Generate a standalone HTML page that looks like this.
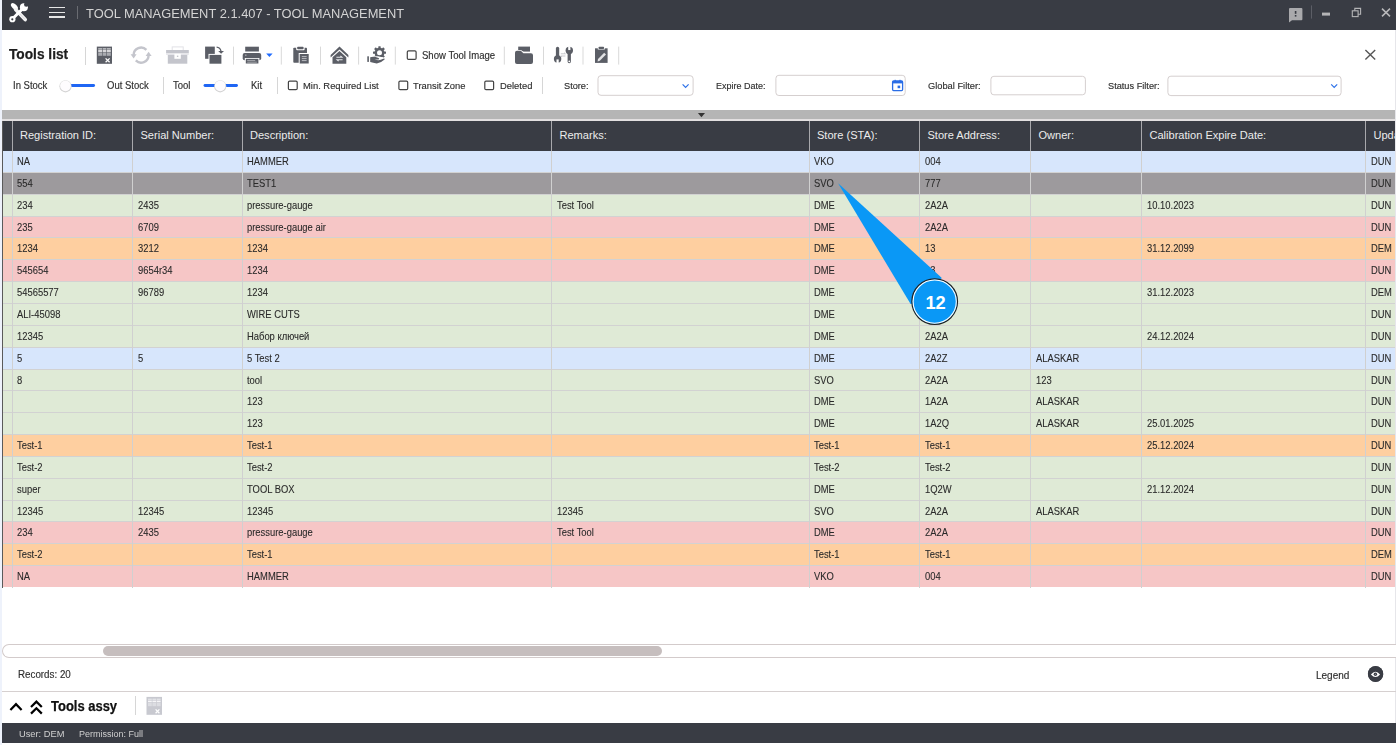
<!DOCTYPE html>
<html><head><meta charset="utf-8"><style>
html,body{margin:0;padding:0;width:1396px;height:746px;overflow:hidden;background:#fff;font-family:"Liberation Sans", sans-serif;}
.t{position:absolute;white-space:nowrap;line-height:1;}
.b{position:absolute;}
svg{position:absolute;}
</style></head><body>
<div class="b" style="left:0px;top:0px;width:2px;height:744.5px;background:#eef2fb"></div>
<div class="b" style="left:2px;top:0px;width:1394px;height:29.5px;background:#393c44"></div>
<div class="t" style="left:85.8px;top:6.93px;font-size:13.2px;color:#d4d4d4;font-weight:400;transform:scaleX(0.977);transform-origin:0 0;">TOOL MANAGEMENT 2.1.407 - TOOL MANAGEMENT</div>
<div class="b" style="left:49px;top:6.8px;width:16px;height:1.6px;background:#e6e6e6"></div>
<div class="b" style="left:49px;top:11.6px;width:16px;height:1.6px;background:#e6e6e6"></div>
<div class="b" style="left:49px;top:16.3px;width:16px;height:1.6px;background:#e6e6e6"></div>
<div class="b" style="left:77px;top:5.5px;width:1px;height:13px;background:#6a6c72"></div>
<div class="t" style="left:9px;top:46.81px;font-size:14.4px;color:#1e1e1e;font-weight:700;-webkit-text-stroke:0.25px #1e1e1e;transform:scaleX(0.952);transform-origin:0 0;">Tools list</div>
<div class="b" style="left:85px;top:46.5px;width:1px;height:18px;background:#d6d6d6"></div>
<div class="t" style="left:12.9px;top:81.02px;font-size:10.02px;color:#2e2e2e;font-weight:400;-webkit-text-stroke:0.15px #2e2e2e;transform:scaleX(0.948);transform-origin:0 0;">In Stock</div>
<div class="t" style="left:106.9px;top:81.02px;font-size:10.02px;color:#2e2e2e;font-weight:400;-webkit-text-stroke:0.15px #2e2e2e;transform:scaleX(0.948);transform-origin:0 0;">Out Stock</div>
<div class="b" style="left:163px;top:76.7px;width:1px;height:17px;background:#d6d6d6"></div>
<div class="t" style="left:173px;top:81.02px;font-size:10.02px;color:#2e2e2e;font-weight:400;-webkit-text-stroke:0.15px #2e2e2e;transform:scaleX(0.948);transform-origin:0 0;">Tool</div>
<div class="t" style="left:250.5px;top:81.02px;font-size:10.02px;color:#2e2e2e;font-weight:400;-webkit-text-stroke:0.15px #2e2e2e;transform:scaleX(0.948);transform-origin:0 0;">Kit</div>
<div class="b" style="left:276.5px;top:76.7px;width:1px;height:17px;background:#d6d6d6"></div>
<div class="t" style="left:303.3px;top:81.30px;font-size:9.92px;color:#2e2e2e;font-weight:400;-webkit-text-stroke:0.15px #2e2e2e;transform:scaleX(0.948);transform-origin:0 0;">Min. Required List</div>
<div class="t" style="left:421.5px;top:51.47px;font-size:10.08px;color:#2e2e2e;font-weight:400;-webkit-text-stroke:0.15px #2e2e2e;transform:scaleX(0.948);transform-origin:0 0;">Show Tool Image</div>
<div class="t" style="left:413px;top:81.30px;font-size:9.92px;color:#2e2e2e;font-weight:400;-webkit-text-stroke:0.15px #2e2e2e;transform:scaleX(0.948);transform-origin:0 0;">Transit Zone</div>
<div class="t" style="left:499.7px;top:81.30px;font-size:9.92px;color:#2e2e2e;font-weight:400;-webkit-text-stroke:0.15px #2e2e2e;transform:scaleX(0.948);transform-origin:0 0;">Deleted</div>
<div class="b" style="left:541.5px;top:76.7px;width:1px;height:17px;background:#d6d6d6"></div>
<div class="t" style="left:564.2px;top:80.78px;font-size:9.71px;color:#2e2e2e;font-weight:400;-webkit-text-stroke:0.15px #2e2e2e;transform:scaleX(0.948);transform-origin:0 0;">Store:</div>
<div class="t" style="left:715.8px;top:80.97px;font-size:9.49px;color:#2e2e2e;font-weight:400;-webkit-text-stroke:0.15px #2e2e2e;transform:scaleX(0.948);transform-origin:0 0;">Expire Date:</div>
<div class="t" style="left:927.8px;top:80.70px;font-size:9.81px;color:#2e2e2e;font-weight:400;-webkit-text-stroke:0.15px #2e2e2e;transform:scaleX(0.948);transform-origin:0 0;">Global Filter:</div>
<div class="t" style="left:1108.2px;top:80.78px;font-size:9.71px;color:#2e2e2e;font-weight:400;-webkit-text-stroke:0.15px #2e2e2e;transform:scaleX(0.948);transform-origin:0 0;">Status Filter:</div>
<div class="b" style="left:2px;top:109.7px;width:1394px;height:9.3px;background:#b5b5b5"></div>
<div class="b" style="left:2px;top:119px;width:1394px;height:2px;background:#e2dfe0"></div>
<div class="b" style="left:2px;top:121px;width:1394px;height:29.5px;background:#393c44"></div>
<div class="t" style="left:20px;top:129.65px;font-size:11.05px;color:#ececec;font-weight:400;">Registration ID:</div>
<div class="t" style="left:140.5px;top:129.65px;font-size:11.05px;color:#ececec;font-weight:400;">Serial Number:</div>
<div class="t" style="left:250px;top:129.65px;font-size:11.05px;color:#ececec;font-weight:400;">Description:</div>
<div class="t" style="left:559.5px;top:129.65px;font-size:11.05px;color:#ececec;font-weight:400;">Remarks:</div>
<div class="t" style="left:817px;top:129.65px;font-size:11.05px;color:#ececec;font-weight:400;">Store (STA):</div>
<div class="t" style="left:927.5px;top:129.65px;font-size:11.05px;color:#ececec;font-weight:400;">Store Address:</div>
<div class="t" style="left:1038.5px;top:129.65px;font-size:11.05px;color:#ececec;font-weight:400;">Owner:</div>
<div class="t" style="left:1149.5px;top:129.65px;font-size:11.05px;color:#ececec;font-weight:400;">Calibration Expire Date:</div>
<div class="t" style="left:1373.5px;top:129.65px;font-size:11.05px;color:#ececec;font-weight:400;">Update</div>
<div class="b" style="left:11.5px;top:121px;width:1px;height:29.5px;background:#a8a8ac"></div>
<div class="b" style="left:132.0px;top:121px;width:1px;height:29.5px;background:#a8a8ac"></div>
<div class="b" style="left:241.5px;top:121px;width:1px;height:29.5px;background:#a8a8ac"></div>
<div class="b" style="left:551.0px;top:121px;width:1px;height:29.5px;background:#a8a8ac"></div>
<div class="b" style="left:808.5px;top:121px;width:1px;height:29.5px;background:#a8a8ac"></div>
<div class="b" style="left:919.0px;top:121px;width:1px;height:29.5px;background:#a8a8ac"></div>
<div class="b" style="left:1030.0px;top:121px;width:1px;height:29.5px;background:#a8a8ac"></div>
<div class="b" style="left:1141.0px;top:121px;width:1px;height:29.5px;background:#a8a8ac"></div>
<div class="b" style="left:1365.0px;top:121px;width:1px;height:29.5px;background:#a8a8ac"></div>
<div class="b" style="left:3px;top:150.5px;width:1393px;height:21.85px;background:#d7e6fc"></div>
<div class="t" style="left:17.3px;top:156.01px;font-size:10.5px;color:#2a2a2a;font-weight:400;-webkit-text-stroke:0.1px #2a2a2a;transform:scaleX(0.895);transform-origin:0 0;">NA</div>
<div class="t" style="left:247.3px;top:156.01px;font-size:10.5px;color:#2a2a2a;font-weight:400;-webkit-text-stroke:0.1px #2a2a2a;transform:scaleX(0.895);transform-origin:0 0;">HAMMER</div>
<div class="t" style="left:814.3px;top:156.01px;font-size:10.5px;color:#2a2a2a;font-weight:400;-webkit-text-stroke:0.1px #2a2a2a;transform:scaleX(0.895);transform-origin:0 0;">VKO</div>
<div class="t" style="left:924.8px;top:156.01px;font-size:10.5px;color:#2a2a2a;font-weight:400;-webkit-text-stroke:0.1px #2a2a2a;transform:scaleX(0.895);transform-origin:0 0;">004</div>
<div class="t" style="left:1370.8px;top:156.01px;font-size:10.5px;color:#2a2a2a;font-weight:400;-webkit-text-stroke:0.1px #2a2a2a;transform:scaleX(0.895);transform-origin:0 0;">DUN</div>
<div class="b" style="left:3px;top:172.35px;width:1393px;height:21.85px;background:#9d9a9d"></div>
<div class="b" style="left:3px;top:171.85px;width:1393px;height:1px;background:#d2d2d2"></div>
<div class="t" style="left:17.3px;top:177.86px;font-size:10.5px;color:#2a2a2a;font-weight:400;-webkit-text-stroke:0.1px #2a2a2a;transform:scaleX(0.895);transform-origin:0 0;">554</div>
<div class="t" style="left:247.3px;top:177.86px;font-size:10.5px;color:#2a2a2a;font-weight:400;-webkit-text-stroke:0.1px #2a2a2a;transform:scaleX(0.895);transform-origin:0 0;">TEST1</div>
<div class="t" style="left:814.3px;top:177.86px;font-size:10.5px;color:#2a2a2a;font-weight:400;-webkit-text-stroke:0.1px #2a2a2a;transform:scaleX(0.895);transform-origin:0 0;">SVO</div>
<div class="t" style="left:924.8px;top:177.86px;font-size:10.5px;color:#2a2a2a;font-weight:400;-webkit-text-stroke:0.1px #2a2a2a;transform:scaleX(0.895);transform-origin:0 0;">777</div>
<div class="t" style="left:1370.8px;top:177.86px;font-size:10.5px;color:#2a2a2a;font-weight:400;-webkit-text-stroke:0.1px #2a2a2a;transform:scaleX(0.895);transform-origin:0 0;">DUN</div>
<div class="b" style="left:3px;top:194.2px;width:1393px;height:21.85px;background:#dfead6"></div>
<div class="b" style="left:3px;top:193.7px;width:1393px;height:1px;background:#d2d2d2"></div>
<div class="t" style="left:17.3px;top:199.71px;font-size:10.5px;color:#2a2a2a;font-weight:400;-webkit-text-stroke:0.1px #2a2a2a;transform:scaleX(0.895);transform-origin:0 0;">234</div>
<div class="t" style="left:137.8px;top:199.71px;font-size:10.5px;color:#2a2a2a;font-weight:400;-webkit-text-stroke:0.1px #2a2a2a;transform:scaleX(0.895);transform-origin:0 0;">2435</div>
<div class="t" style="left:247.3px;top:199.71px;font-size:10.5px;color:#2a2a2a;font-weight:400;-webkit-text-stroke:0.1px #2a2a2a;transform:scaleX(0.895);transform-origin:0 0;">pressure-gauge</div>
<div class="t" style="left:556.8px;top:199.71px;font-size:10.5px;color:#2a2a2a;font-weight:400;-webkit-text-stroke:0.1px #2a2a2a;transform:scaleX(0.895);transform-origin:0 0;">Test Tool</div>
<div class="t" style="left:814.3px;top:199.71px;font-size:10.5px;color:#2a2a2a;font-weight:400;-webkit-text-stroke:0.1px #2a2a2a;transform:scaleX(0.895);transform-origin:0 0;">DME</div>
<div class="t" style="left:924.8px;top:199.71px;font-size:10.5px;color:#2a2a2a;font-weight:400;-webkit-text-stroke:0.1px #2a2a2a;transform:scaleX(0.895);transform-origin:0 0;">2A2A</div>
<div class="t" style="left:1146.8px;top:199.71px;font-size:10.5px;color:#2a2a2a;font-weight:400;-webkit-text-stroke:0.1px #2a2a2a;transform:scaleX(0.895);transform-origin:0 0;">10.10.2023</div>
<div class="t" style="left:1370.8px;top:199.71px;font-size:10.5px;color:#2a2a2a;font-weight:400;-webkit-text-stroke:0.1px #2a2a2a;transform:scaleX(0.895);transform-origin:0 0;">DUN</div>
<div class="b" style="left:3px;top:216.05px;width:1393px;height:21.85px;background:#f6c6c6"></div>
<div class="b" style="left:3px;top:215.55px;width:1393px;height:1px;background:#d2d2d2"></div>
<div class="t" style="left:17.3px;top:221.56px;font-size:10.5px;color:#2a2a2a;font-weight:400;-webkit-text-stroke:0.1px #2a2a2a;transform:scaleX(0.895);transform-origin:0 0;">235</div>
<div class="t" style="left:137.8px;top:221.56px;font-size:10.5px;color:#2a2a2a;font-weight:400;-webkit-text-stroke:0.1px #2a2a2a;transform:scaleX(0.895);transform-origin:0 0;">6709</div>
<div class="t" style="left:247.3px;top:221.56px;font-size:10.5px;color:#2a2a2a;font-weight:400;-webkit-text-stroke:0.1px #2a2a2a;transform:scaleX(0.895);transform-origin:0 0;">pressure-gauge air</div>
<div class="t" style="left:814.3px;top:221.56px;font-size:10.5px;color:#2a2a2a;font-weight:400;-webkit-text-stroke:0.1px #2a2a2a;transform:scaleX(0.895);transform-origin:0 0;">DME</div>
<div class="t" style="left:924.8px;top:221.56px;font-size:10.5px;color:#2a2a2a;font-weight:400;-webkit-text-stroke:0.1px #2a2a2a;transform:scaleX(0.895);transform-origin:0 0;">2A2A</div>
<div class="t" style="left:1370.8px;top:221.56px;font-size:10.5px;color:#2a2a2a;font-weight:400;-webkit-text-stroke:0.1px #2a2a2a;transform:scaleX(0.895);transform-origin:0 0;">DUN</div>
<div class="b" style="left:3px;top:237.9px;width:1393px;height:21.85px;background:#fecfa0"></div>
<div class="b" style="left:3px;top:237.4px;width:1393px;height:1px;background:#d2d2d2"></div>
<div class="t" style="left:17.3px;top:243.41px;font-size:10.5px;color:#2a2a2a;font-weight:400;-webkit-text-stroke:0.1px #2a2a2a;transform:scaleX(0.895);transform-origin:0 0;">1234</div>
<div class="t" style="left:137.8px;top:243.41px;font-size:10.5px;color:#2a2a2a;font-weight:400;-webkit-text-stroke:0.1px #2a2a2a;transform:scaleX(0.895);transform-origin:0 0;">3212</div>
<div class="t" style="left:247.3px;top:243.41px;font-size:10.5px;color:#2a2a2a;font-weight:400;-webkit-text-stroke:0.1px #2a2a2a;transform:scaleX(0.895);transform-origin:0 0;">1234</div>
<div class="t" style="left:814.3px;top:243.41px;font-size:10.5px;color:#2a2a2a;font-weight:400;-webkit-text-stroke:0.1px #2a2a2a;transform:scaleX(0.895);transform-origin:0 0;">DME</div>
<div class="t" style="left:924.8px;top:243.41px;font-size:10.5px;color:#2a2a2a;font-weight:400;-webkit-text-stroke:0.1px #2a2a2a;transform:scaleX(0.895);transform-origin:0 0;">13</div>
<div class="t" style="left:1146.8px;top:243.41px;font-size:10.5px;color:#2a2a2a;font-weight:400;-webkit-text-stroke:0.1px #2a2a2a;transform:scaleX(0.895);transform-origin:0 0;">31.12.2099</div>
<div class="t" style="left:1370.8px;top:243.41px;font-size:10.5px;color:#2a2a2a;font-weight:400;-webkit-text-stroke:0.1px #2a2a2a;transform:scaleX(0.895);transform-origin:0 0;">DEM</div>
<div class="b" style="left:3px;top:259.75px;width:1393px;height:21.85px;background:#f6c6c6"></div>
<div class="b" style="left:3px;top:259.25px;width:1393px;height:1px;background:#d2d2d2"></div>
<div class="t" style="left:17.3px;top:265.26px;font-size:10.5px;color:#2a2a2a;font-weight:400;-webkit-text-stroke:0.1px #2a2a2a;transform:scaleX(0.895);transform-origin:0 0;">545654</div>
<div class="t" style="left:137.8px;top:265.26px;font-size:10.5px;color:#2a2a2a;font-weight:400;-webkit-text-stroke:0.1px #2a2a2a;transform:scaleX(0.895);transform-origin:0 0;">9654r34</div>
<div class="t" style="left:247.3px;top:265.26px;font-size:10.5px;color:#2a2a2a;font-weight:400;-webkit-text-stroke:0.1px #2a2a2a;transform:scaleX(0.895);transform-origin:0 0;">1234</div>
<div class="t" style="left:814.3px;top:265.26px;font-size:10.5px;color:#2a2a2a;font-weight:400;-webkit-text-stroke:0.1px #2a2a2a;transform:scaleX(0.895);transform-origin:0 0;">DME</div>
<div class="t" style="left:924.8px;top:265.26px;font-size:10.5px;color:#2a2a2a;font-weight:400;-webkit-text-stroke:0.1px #2a2a2a;transform:scaleX(0.895);transform-origin:0 0;">13</div>
<div class="t" style="left:1370.8px;top:265.26px;font-size:10.5px;color:#2a2a2a;font-weight:400;-webkit-text-stroke:0.1px #2a2a2a;transform:scaleX(0.895);transform-origin:0 0;">DUN</div>
<div class="b" style="left:3px;top:281.6px;width:1393px;height:21.85px;background:#dfead6"></div>
<div class="b" style="left:3px;top:281.1px;width:1393px;height:1px;background:#d2d2d2"></div>
<div class="t" style="left:17.3px;top:287.11px;font-size:10.5px;color:#2a2a2a;font-weight:400;-webkit-text-stroke:0.1px #2a2a2a;transform:scaleX(0.895);transform-origin:0 0;">54565577</div>
<div class="t" style="left:137.8px;top:287.11px;font-size:10.5px;color:#2a2a2a;font-weight:400;-webkit-text-stroke:0.1px #2a2a2a;transform:scaleX(0.895);transform-origin:0 0;">96789</div>
<div class="t" style="left:247.3px;top:287.11px;font-size:10.5px;color:#2a2a2a;font-weight:400;-webkit-text-stroke:0.1px #2a2a2a;transform:scaleX(0.895);transform-origin:0 0;">1234</div>
<div class="t" style="left:814.3px;top:287.11px;font-size:10.5px;color:#2a2a2a;font-weight:400;-webkit-text-stroke:0.1px #2a2a2a;transform:scaleX(0.895);transform-origin:0 0;">DME</div>
<div class="t" style="left:1146.8px;top:287.11px;font-size:10.5px;color:#2a2a2a;font-weight:400;-webkit-text-stroke:0.1px #2a2a2a;transform:scaleX(0.895);transform-origin:0 0;">31.12.2023</div>
<div class="t" style="left:1370.8px;top:287.11px;font-size:10.5px;color:#2a2a2a;font-weight:400;-webkit-text-stroke:0.1px #2a2a2a;transform:scaleX(0.895);transform-origin:0 0;">DEM</div>
<div class="b" style="left:3px;top:303.45px;width:1393px;height:21.85px;background:#dfead6"></div>
<div class="b" style="left:3px;top:302.95px;width:1393px;height:1px;background:#d2d2d2"></div>
<div class="t" style="left:17.3px;top:308.96px;font-size:10.5px;color:#2a2a2a;font-weight:400;-webkit-text-stroke:0.1px #2a2a2a;transform:scaleX(0.895);transform-origin:0 0;">ALI-45098</div>
<div class="t" style="left:247.3px;top:308.96px;font-size:10.5px;color:#2a2a2a;font-weight:400;-webkit-text-stroke:0.1px #2a2a2a;transform:scaleX(0.895);transform-origin:0 0;">WIRE CUTS</div>
<div class="t" style="left:814.3px;top:308.96px;font-size:10.5px;color:#2a2a2a;font-weight:400;-webkit-text-stroke:0.1px #2a2a2a;transform:scaleX(0.895);transform-origin:0 0;">DME</div>
<div class="t" style="left:1370.8px;top:308.96px;font-size:10.5px;color:#2a2a2a;font-weight:400;-webkit-text-stroke:0.1px #2a2a2a;transform:scaleX(0.895);transform-origin:0 0;">DUN</div>
<div class="b" style="left:3px;top:325.3px;width:1393px;height:21.85px;background:#dfead6"></div>
<div class="b" style="left:3px;top:324.8px;width:1393px;height:1px;background:#d2d2d2"></div>
<div class="t" style="left:17.3px;top:330.81px;font-size:10.5px;color:#2a2a2a;font-weight:400;-webkit-text-stroke:0.1px #2a2a2a;transform:scaleX(0.895);transform-origin:0 0;">12345</div>
<div class="t" style="left:247.3px;top:330.81px;font-size:10.5px;color:#2a2a2a;font-weight:400;-webkit-text-stroke:0.1px #2a2a2a;transform:scaleX(0.895);transform-origin:0 0;">Набор ключей</div>
<div class="t" style="left:814.3px;top:330.81px;font-size:10.5px;color:#2a2a2a;font-weight:400;-webkit-text-stroke:0.1px #2a2a2a;transform:scaleX(0.895);transform-origin:0 0;">DME</div>
<div class="t" style="left:924.8px;top:330.81px;font-size:10.5px;color:#2a2a2a;font-weight:400;-webkit-text-stroke:0.1px #2a2a2a;transform:scaleX(0.895);transform-origin:0 0;">2A2A</div>
<div class="t" style="left:1146.8px;top:330.81px;font-size:10.5px;color:#2a2a2a;font-weight:400;-webkit-text-stroke:0.1px #2a2a2a;transform:scaleX(0.895);transform-origin:0 0;">24.12.2024</div>
<div class="t" style="left:1370.8px;top:330.81px;font-size:10.5px;color:#2a2a2a;font-weight:400;-webkit-text-stroke:0.1px #2a2a2a;transform:scaleX(0.895);transform-origin:0 0;">DUN</div>
<div class="b" style="left:3px;top:347.15px;width:1393px;height:21.85px;background:#d7e6fc"></div>
<div class="b" style="left:3px;top:346.65px;width:1393px;height:1px;background:#d2d2d2"></div>
<div class="t" style="left:17.3px;top:352.66px;font-size:10.5px;color:#2a2a2a;font-weight:400;-webkit-text-stroke:0.1px #2a2a2a;transform:scaleX(0.895);transform-origin:0 0;">5</div>
<div class="t" style="left:137.8px;top:352.66px;font-size:10.5px;color:#2a2a2a;font-weight:400;-webkit-text-stroke:0.1px #2a2a2a;transform:scaleX(0.895);transform-origin:0 0;">5</div>
<div class="t" style="left:247.3px;top:352.66px;font-size:10.5px;color:#2a2a2a;font-weight:400;-webkit-text-stroke:0.1px #2a2a2a;transform:scaleX(0.895);transform-origin:0 0;">5 Test 2</div>
<div class="t" style="left:814.3px;top:352.66px;font-size:10.5px;color:#2a2a2a;font-weight:400;-webkit-text-stroke:0.1px #2a2a2a;transform:scaleX(0.895);transform-origin:0 0;">DME</div>
<div class="t" style="left:924.8px;top:352.66px;font-size:10.5px;color:#2a2a2a;font-weight:400;-webkit-text-stroke:0.1px #2a2a2a;transform:scaleX(0.895);transform-origin:0 0;">2A2Z</div>
<div class="t" style="left:1035.8px;top:352.66px;font-size:10.5px;color:#2a2a2a;font-weight:400;-webkit-text-stroke:0.1px #2a2a2a;transform:scaleX(0.895);transform-origin:0 0;">ALASKAR</div>
<div class="t" style="left:1370.8px;top:352.66px;font-size:10.5px;color:#2a2a2a;font-weight:400;-webkit-text-stroke:0.1px #2a2a2a;transform:scaleX(0.895);transform-origin:0 0;">DUN</div>
<div class="b" style="left:3px;top:369.0px;width:1393px;height:21.85px;background:#dfead6"></div>
<div class="b" style="left:3px;top:368.5px;width:1393px;height:1px;background:#d2d2d2"></div>
<div class="t" style="left:17.3px;top:374.51px;font-size:10.5px;color:#2a2a2a;font-weight:400;-webkit-text-stroke:0.1px #2a2a2a;transform:scaleX(0.895);transform-origin:0 0;">8</div>
<div class="t" style="left:247.3px;top:374.51px;font-size:10.5px;color:#2a2a2a;font-weight:400;-webkit-text-stroke:0.1px #2a2a2a;transform:scaleX(0.895);transform-origin:0 0;">tool</div>
<div class="t" style="left:814.3px;top:374.51px;font-size:10.5px;color:#2a2a2a;font-weight:400;-webkit-text-stroke:0.1px #2a2a2a;transform:scaleX(0.895);transform-origin:0 0;">SVO</div>
<div class="t" style="left:924.8px;top:374.51px;font-size:10.5px;color:#2a2a2a;font-weight:400;-webkit-text-stroke:0.1px #2a2a2a;transform:scaleX(0.895);transform-origin:0 0;">2A2A</div>
<div class="t" style="left:1035.8px;top:374.51px;font-size:10.5px;color:#2a2a2a;font-weight:400;-webkit-text-stroke:0.1px #2a2a2a;transform:scaleX(0.895);transform-origin:0 0;">123</div>
<div class="t" style="left:1370.8px;top:374.51px;font-size:10.5px;color:#2a2a2a;font-weight:400;-webkit-text-stroke:0.1px #2a2a2a;transform:scaleX(0.895);transform-origin:0 0;">DUN</div>
<div class="b" style="left:3px;top:390.85px;width:1393px;height:21.85px;background:#dfead6"></div>
<div class="b" style="left:3px;top:390.35px;width:1393px;height:1px;background:#d2d2d2"></div>
<div class="t" style="left:247.3px;top:396.36px;font-size:10.5px;color:#2a2a2a;font-weight:400;-webkit-text-stroke:0.1px #2a2a2a;transform:scaleX(0.895);transform-origin:0 0;">123</div>
<div class="t" style="left:814.3px;top:396.36px;font-size:10.5px;color:#2a2a2a;font-weight:400;-webkit-text-stroke:0.1px #2a2a2a;transform:scaleX(0.895);transform-origin:0 0;">DME</div>
<div class="t" style="left:924.8px;top:396.36px;font-size:10.5px;color:#2a2a2a;font-weight:400;-webkit-text-stroke:0.1px #2a2a2a;transform:scaleX(0.895);transform-origin:0 0;">1A2A</div>
<div class="t" style="left:1035.8px;top:396.36px;font-size:10.5px;color:#2a2a2a;font-weight:400;-webkit-text-stroke:0.1px #2a2a2a;transform:scaleX(0.895);transform-origin:0 0;">ALASKAR</div>
<div class="t" style="left:1370.8px;top:396.36px;font-size:10.5px;color:#2a2a2a;font-weight:400;-webkit-text-stroke:0.1px #2a2a2a;transform:scaleX(0.895);transform-origin:0 0;">DUN</div>
<div class="b" style="left:3px;top:412.7px;width:1393px;height:21.85px;background:#dfead6"></div>
<div class="b" style="left:3px;top:412.2px;width:1393px;height:1px;background:#d2d2d2"></div>
<div class="t" style="left:247.3px;top:418.21px;font-size:10.5px;color:#2a2a2a;font-weight:400;-webkit-text-stroke:0.1px #2a2a2a;transform:scaleX(0.895);transform-origin:0 0;">123</div>
<div class="t" style="left:814.3px;top:418.21px;font-size:10.5px;color:#2a2a2a;font-weight:400;-webkit-text-stroke:0.1px #2a2a2a;transform:scaleX(0.895);transform-origin:0 0;">DME</div>
<div class="t" style="left:924.8px;top:418.21px;font-size:10.5px;color:#2a2a2a;font-weight:400;-webkit-text-stroke:0.1px #2a2a2a;transform:scaleX(0.895);transform-origin:0 0;">1A2Q</div>
<div class="t" style="left:1035.8px;top:418.21px;font-size:10.5px;color:#2a2a2a;font-weight:400;-webkit-text-stroke:0.1px #2a2a2a;transform:scaleX(0.895);transform-origin:0 0;">ALASKAR</div>
<div class="t" style="left:1146.8px;top:418.21px;font-size:10.5px;color:#2a2a2a;font-weight:400;-webkit-text-stroke:0.1px #2a2a2a;transform:scaleX(0.895);transform-origin:0 0;">25.01.2025</div>
<div class="t" style="left:1370.8px;top:418.21px;font-size:10.5px;color:#2a2a2a;font-weight:400;-webkit-text-stroke:0.1px #2a2a2a;transform:scaleX(0.895);transform-origin:0 0;">DUN</div>
<div class="b" style="left:3px;top:434.55px;width:1393px;height:21.85px;background:#fecfa0"></div>
<div class="b" style="left:3px;top:434.05px;width:1393px;height:1px;background:#d2d2d2"></div>
<div class="t" style="left:17.3px;top:440.06px;font-size:10.5px;color:#2a2a2a;font-weight:400;-webkit-text-stroke:0.1px #2a2a2a;transform:scaleX(0.895);transform-origin:0 0;">Test-1</div>
<div class="t" style="left:247.3px;top:440.06px;font-size:10.5px;color:#2a2a2a;font-weight:400;-webkit-text-stroke:0.1px #2a2a2a;transform:scaleX(0.895);transform-origin:0 0;">Test-1</div>
<div class="t" style="left:814.3px;top:440.06px;font-size:10.5px;color:#2a2a2a;font-weight:400;-webkit-text-stroke:0.1px #2a2a2a;transform:scaleX(0.895);transform-origin:0 0;">Test-1</div>
<div class="t" style="left:924.8px;top:440.06px;font-size:10.5px;color:#2a2a2a;font-weight:400;-webkit-text-stroke:0.1px #2a2a2a;transform:scaleX(0.895);transform-origin:0 0;">Test-1</div>
<div class="t" style="left:1146.8px;top:440.06px;font-size:10.5px;color:#2a2a2a;font-weight:400;-webkit-text-stroke:0.1px #2a2a2a;transform:scaleX(0.895);transform-origin:0 0;">25.12.2024</div>
<div class="t" style="left:1370.8px;top:440.06px;font-size:10.5px;color:#2a2a2a;font-weight:400;-webkit-text-stroke:0.1px #2a2a2a;transform:scaleX(0.895);transform-origin:0 0;">DUN</div>
<div class="b" style="left:3px;top:456.4px;width:1393px;height:21.85px;background:#dfead6"></div>
<div class="b" style="left:3px;top:455.9px;width:1393px;height:1px;background:#d2d2d2"></div>
<div class="t" style="left:17.3px;top:461.91px;font-size:10.5px;color:#2a2a2a;font-weight:400;-webkit-text-stroke:0.1px #2a2a2a;transform:scaleX(0.895);transform-origin:0 0;">Test-2</div>
<div class="t" style="left:247.3px;top:461.91px;font-size:10.5px;color:#2a2a2a;font-weight:400;-webkit-text-stroke:0.1px #2a2a2a;transform:scaleX(0.895);transform-origin:0 0;">Test-2</div>
<div class="t" style="left:814.3px;top:461.91px;font-size:10.5px;color:#2a2a2a;font-weight:400;-webkit-text-stroke:0.1px #2a2a2a;transform:scaleX(0.895);transform-origin:0 0;">Test-2</div>
<div class="t" style="left:924.8px;top:461.91px;font-size:10.5px;color:#2a2a2a;font-weight:400;-webkit-text-stroke:0.1px #2a2a2a;transform:scaleX(0.895);transform-origin:0 0;">Test-2</div>
<div class="t" style="left:1370.8px;top:461.91px;font-size:10.5px;color:#2a2a2a;font-weight:400;-webkit-text-stroke:0.1px #2a2a2a;transform:scaleX(0.895);transform-origin:0 0;">DUN</div>
<div class="b" style="left:3px;top:478.25px;width:1393px;height:21.85px;background:#dfead6"></div>
<div class="b" style="left:3px;top:477.75px;width:1393px;height:1px;background:#d2d2d2"></div>
<div class="t" style="left:17.3px;top:483.76px;font-size:10.5px;color:#2a2a2a;font-weight:400;-webkit-text-stroke:0.1px #2a2a2a;transform:scaleX(0.895);transform-origin:0 0;">super</div>
<div class="t" style="left:247.3px;top:483.76px;font-size:10.5px;color:#2a2a2a;font-weight:400;-webkit-text-stroke:0.1px #2a2a2a;transform:scaleX(0.895);transform-origin:0 0;">TOOL BOX</div>
<div class="t" style="left:814.3px;top:483.76px;font-size:10.5px;color:#2a2a2a;font-weight:400;-webkit-text-stroke:0.1px #2a2a2a;transform:scaleX(0.895);transform-origin:0 0;">DME</div>
<div class="t" style="left:924.8px;top:483.76px;font-size:10.5px;color:#2a2a2a;font-weight:400;-webkit-text-stroke:0.1px #2a2a2a;transform:scaleX(0.895);transform-origin:0 0;">1Q2W</div>
<div class="t" style="left:1146.8px;top:483.76px;font-size:10.5px;color:#2a2a2a;font-weight:400;-webkit-text-stroke:0.1px #2a2a2a;transform:scaleX(0.895);transform-origin:0 0;">21.12.2024</div>
<div class="t" style="left:1370.8px;top:483.76px;font-size:10.5px;color:#2a2a2a;font-weight:400;-webkit-text-stroke:0.1px #2a2a2a;transform:scaleX(0.895);transform-origin:0 0;">DUN</div>
<div class="b" style="left:3px;top:500.1px;width:1393px;height:21.85px;background:#dfead6"></div>
<div class="b" style="left:3px;top:499.6px;width:1393px;height:1px;background:#d2d2d2"></div>
<div class="t" style="left:17.3px;top:505.61px;font-size:10.5px;color:#2a2a2a;font-weight:400;-webkit-text-stroke:0.1px #2a2a2a;transform:scaleX(0.895);transform-origin:0 0;">12345</div>
<div class="t" style="left:137.8px;top:505.61px;font-size:10.5px;color:#2a2a2a;font-weight:400;-webkit-text-stroke:0.1px #2a2a2a;transform:scaleX(0.895);transform-origin:0 0;">12345</div>
<div class="t" style="left:247.3px;top:505.61px;font-size:10.5px;color:#2a2a2a;font-weight:400;-webkit-text-stroke:0.1px #2a2a2a;transform:scaleX(0.895);transform-origin:0 0;">12345</div>
<div class="t" style="left:556.8px;top:505.61px;font-size:10.5px;color:#2a2a2a;font-weight:400;-webkit-text-stroke:0.1px #2a2a2a;transform:scaleX(0.895);transform-origin:0 0;">12345</div>
<div class="t" style="left:814.3px;top:505.61px;font-size:10.5px;color:#2a2a2a;font-weight:400;-webkit-text-stroke:0.1px #2a2a2a;transform:scaleX(0.895);transform-origin:0 0;">SVO</div>
<div class="t" style="left:924.8px;top:505.61px;font-size:10.5px;color:#2a2a2a;font-weight:400;-webkit-text-stroke:0.1px #2a2a2a;transform:scaleX(0.895);transform-origin:0 0;">2A2A</div>
<div class="t" style="left:1035.8px;top:505.61px;font-size:10.5px;color:#2a2a2a;font-weight:400;-webkit-text-stroke:0.1px #2a2a2a;transform:scaleX(0.895);transform-origin:0 0;">ALASKAR</div>
<div class="t" style="left:1370.8px;top:505.61px;font-size:10.5px;color:#2a2a2a;font-weight:400;-webkit-text-stroke:0.1px #2a2a2a;transform:scaleX(0.895);transform-origin:0 0;">DUN</div>
<div class="b" style="left:3px;top:521.95px;width:1393px;height:21.85px;background:#f6c6c6"></div>
<div class="b" style="left:3px;top:521.45px;width:1393px;height:1px;background:#d2d2d2"></div>
<div class="t" style="left:17.3px;top:527.46px;font-size:10.5px;color:#2a2a2a;font-weight:400;-webkit-text-stroke:0.1px #2a2a2a;transform:scaleX(0.895);transform-origin:0 0;">234</div>
<div class="t" style="left:137.8px;top:527.46px;font-size:10.5px;color:#2a2a2a;font-weight:400;-webkit-text-stroke:0.1px #2a2a2a;transform:scaleX(0.895);transform-origin:0 0;">2435</div>
<div class="t" style="left:247.3px;top:527.46px;font-size:10.5px;color:#2a2a2a;font-weight:400;-webkit-text-stroke:0.1px #2a2a2a;transform:scaleX(0.895);transform-origin:0 0;">pressure-gauge</div>
<div class="t" style="left:556.8px;top:527.46px;font-size:10.5px;color:#2a2a2a;font-weight:400;-webkit-text-stroke:0.1px #2a2a2a;transform:scaleX(0.895);transform-origin:0 0;">Test Tool</div>
<div class="t" style="left:814.3px;top:527.46px;font-size:10.5px;color:#2a2a2a;font-weight:400;-webkit-text-stroke:0.1px #2a2a2a;transform:scaleX(0.895);transform-origin:0 0;">DME</div>
<div class="t" style="left:924.8px;top:527.46px;font-size:10.5px;color:#2a2a2a;font-weight:400;-webkit-text-stroke:0.1px #2a2a2a;transform:scaleX(0.895);transform-origin:0 0;">2A2A</div>
<div class="t" style="left:1370.8px;top:527.46px;font-size:10.5px;color:#2a2a2a;font-weight:400;-webkit-text-stroke:0.1px #2a2a2a;transform:scaleX(0.895);transform-origin:0 0;">DUN</div>
<div class="b" style="left:3px;top:543.8px;width:1393px;height:21.85px;background:#fecfa0"></div>
<div class="b" style="left:3px;top:543.3px;width:1393px;height:1px;background:#d2d2d2"></div>
<div class="t" style="left:17.3px;top:549.31px;font-size:10.5px;color:#2a2a2a;font-weight:400;-webkit-text-stroke:0.1px #2a2a2a;transform:scaleX(0.895);transform-origin:0 0;">Test-2</div>
<div class="t" style="left:247.3px;top:549.31px;font-size:10.5px;color:#2a2a2a;font-weight:400;-webkit-text-stroke:0.1px #2a2a2a;transform:scaleX(0.895);transform-origin:0 0;">Test-1</div>
<div class="t" style="left:814.3px;top:549.31px;font-size:10.5px;color:#2a2a2a;font-weight:400;-webkit-text-stroke:0.1px #2a2a2a;transform:scaleX(0.895);transform-origin:0 0;">Test-1</div>
<div class="t" style="left:924.8px;top:549.31px;font-size:10.5px;color:#2a2a2a;font-weight:400;-webkit-text-stroke:0.1px #2a2a2a;transform:scaleX(0.895);transform-origin:0 0;">Test-1</div>
<div class="t" style="left:1370.8px;top:549.31px;font-size:10.5px;color:#2a2a2a;font-weight:400;-webkit-text-stroke:0.1px #2a2a2a;transform:scaleX(0.895);transform-origin:0 0;">DEM</div>
<div class="b" style="left:3px;top:565.65px;width:1393px;height:21.85px;background:#f6c6c6"></div>
<div class="b" style="left:3px;top:565.15px;width:1393px;height:1px;background:#d2d2d2"></div>
<div class="t" style="left:17.3px;top:571.16px;font-size:10.5px;color:#2a2a2a;font-weight:400;-webkit-text-stroke:0.1px #2a2a2a;transform:scaleX(0.895);transform-origin:0 0;">NA</div>
<div class="t" style="left:247.3px;top:571.16px;font-size:10.5px;color:#2a2a2a;font-weight:400;-webkit-text-stroke:0.1px #2a2a2a;transform:scaleX(0.895);transform-origin:0 0;">HAMMER</div>
<div class="t" style="left:814.3px;top:571.16px;font-size:10.5px;color:#2a2a2a;font-weight:400;-webkit-text-stroke:0.1px #2a2a2a;transform:scaleX(0.895);transform-origin:0 0;">VKO</div>
<div class="t" style="left:924.8px;top:571.16px;font-size:10.5px;color:#2a2a2a;font-weight:400;-webkit-text-stroke:0.1px #2a2a2a;transform:scaleX(0.895);transform-origin:0 0;">004</div>
<div class="t" style="left:1370.8px;top:571.16px;font-size:10.5px;color:#2a2a2a;font-weight:400;-webkit-text-stroke:0.1px #2a2a2a;transform:scaleX(0.895);transform-origin:0 0;">DUN</div>
<div class="b" style="left:11.5px;top:150.5px;width:1px;height:437.0px;background:#d0d0d0"></div>
<div class="b" style="left:132.0px;top:150.5px;width:1px;height:437.0px;background:#d0d0d0"></div>
<div class="b" style="left:241.5px;top:150.5px;width:1px;height:437.0px;background:#d0d0d0"></div>
<div class="b" style="left:551.0px;top:150.5px;width:1px;height:437.0px;background:#d0d0d0"></div>
<div class="b" style="left:808.5px;top:150.5px;width:1px;height:437.0px;background:#d0d0d0"></div>
<div class="b" style="left:919.0px;top:150.5px;width:1px;height:437.0px;background:#d0d0d0"></div>
<div class="b" style="left:1030.0px;top:150.5px;width:1px;height:437.0px;background:#d0d0d0"></div>
<div class="b" style="left:1141.0px;top:150.5px;width:1px;height:437.0px;background:#d0d0d0"></div>
<div class="b" style="left:1365.0px;top:150.5px;width:1px;height:437.0px;background:#d0d0d0"></div>
<div class="b" style="left:2px;top:121px;width:1px;height:466.5px;background:#5a5a5a"></div>
<div class="b" style="left:1395px;top:29.5px;width:1px;height:693.7px;background:#e6e6ea"></div>
<div class="b" style="left:2px;top:644px;width:1394px;height:13.5px;border:1px solid #d3cbcb;border-right:none;border-radius:7px 0 0 7px;box-sizing:border-box;background:#fff"></div>
<div class="b" style="left:102.6px;top:645.8px;width:559.3px;height:10px;background:#c6bebe;border-radius:5px"></div>
<div class="t" style="left:17.9px;top:670.35px;font-size:10.34px;color:#2e2e2e;font-weight:400;-webkit-text-stroke:0.15px #2e2e2e;transform:scaleX(0.948);transform-origin:0 0;">Records: 20</div>
<div class="t" style="left:1316.3px;top:669.67px;font-size:10.55px;color:#2e2e2e;font-weight:400;-webkit-text-stroke:0.15px #2e2e2e;transform:scaleX(0.948);transform-origin:0 0;">Legend</div>
<div class="b" style="left:1367.8px;top:666.3px;width:15.6px;height:15.6px;background:#393c44;border-radius:50%"></div>
<div class="b" style="left:2px;top:691px;width:1394px;height:1px;background:#d6d0d0"></div>
<div class="t" style="left:51.3px;top:699.52px;font-size:13.8px;color:#111;font-weight:700;-webkit-text-stroke:0.25px #111;transform:scaleX(0.94);transform-origin:0 0;">Tools assy</div>
<div class="b" style="left:134.8px;top:696px;width:1px;height:19px;background:#d6d6d6"></div>
<div class="b" style="left:2px;top:723.2px;width:1394px;height:19.8px;background:#393c44"></div>
<div class="t" style="left:19.4px;top:728.50px;font-size:9.81px;color:#d0d0d0;font-weight:400;transform:scaleX(0.948);transform-origin:0 0;">User: DEM</div>
<div class="t" style="left:79.3px;top:728.77px;font-size:9.49px;color:#d0d0d0;font-weight:400;transform:scaleX(0.948);transform-origin:0 0;">Permission: Full</div>
<svg width="1396" height="746" viewBox="0 0 1396 746" style="left:0;top:0"><defs><filter id="blur" x="-50%" y="-50%" width="200%" height="200%"><feGaussianBlur stdDeviation="0.6"/></filter></defs><ellipse cx="14.4" cy="6.5" rx="4.3" ry="2.3" transform="rotate(45 14.4 6.5)" fill="#fff"/><line x1="15.6" y1="9.6" x2="25.2" y2="19.6" stroke="#f4f4f4" stroke-width="3.6" stroke-linecap="round"/><line x1="19.8" y1="14" x2="24.8" y2="19.2" stroke="#cfcfd2" stroke-width="0.7" /><line x1="12.6" y1="18.8" x2="22.4" y2="9" stroke="#fff" stroke-width="3" stroke-linecap="round"/><circle cx="12.4" cy="19.2" r="3.1" fill="#fff"/><circle cx="12.3" cy="19.3" r="1.1" fill="#393c44"/><circle cx="23.9" cy="7.2" r="4" fill="#fff"/><circle cx="26.3" cy="4.5" r="2.3" fill="#393c44"/><path d="M1289 8 h12.4 a1 1 0 0 1 1 1 v10.2 a1 1 0 0 1 -1 1 h-9.4 l-3 2.4 v-2.4 v-11.2 a1 1 0 0 1 1 -1 z" fill="#a9a9ac"/><rect x="1294.8" y="11" width="1.6" height="2.8" fill="#393c44"/><rect x="1294.8" y="15" width="1.6" height="1.6" fill="#393c44"/><rect x="1311" y="5.4" width="1" height="13.2" fill="#5c5e66"/><rect x="1322" y="12.6" width="8" height="3" fill="#b4b4b6"/><rect x="1352.3" y="10.8" width="5.8" height="5.8" fill="none" stroke="#b4b4b6" stroke-width="1.1"/><path d="M1354.8 10.8 v-2.4 h5.8 v5.8 h-2.5" fill="none" stroke="#b4b4b6" stroke-width="1.1"/><path d="M1382 8.6 L1390 16.4 M1390 8.6 L1382 16.4" stroke="#b8b8ba" stroke-width="1.5"/><rect x="96.8" y="46.6" width="15.2" height="17.2" fill="#5b5e66"/><rect x="98.2" y="48.2" width="3.8" height="1.4" fill="#c9cace"/><rect x="98.2" y="50.2" width="3.8" height="1.6" fill="#f4f4f6"/><rect x="98.2" y="52.4" width="3.8" height="3.4" fill="#a9abb0"/><rect x="102.6" y="48.2" width="3.8" height="1.4" fill="#c9cace"/><rect x="102.6" y="50.2" width="3.8" height="1.6" fill="#f4f4f6"/><rect x="102.6" y="52.4" width="3.8" height="3.4" fill="#a9abb0"/><rect x="107.0" y="48.2" width="3.8" height="1.4" fill="#c9cace"/><rect x="107.0" y="50.2" width="3.8" height="1.6" fill="#f4f4f6"/><rect x="107.0" y="52.4" width="3.8" height="3.4" fill="#a9abb0"/><path d="M105.6 58.4 L109.6 62.2 M109.6 58.4 L105.6 62.2" stroke="#fff" stroke-width="1.3"/><path d="M133.6 55 A7.5 7.5 0 0 1 146.4 49.8" fill="none" stroke="#c4c5cc" stroke-width="2.4"/><path d="M148.6 55.2 A7.5 7.5 0 0 1 135.8 60.4" fill="none" stroke="#c4c5cc" stroke-width="2.4"/><path d="M130.6 54.2 L136.6 54.2 L133.6 58.4 Z" fill="#c4c5cc"/><path d="M145.6 56 L151.6 56 L148.6 51.8 Z" fill="#c4c5cc"/><rect x="172.2" y="46.9" width="11" height="3.6" fill="none" stroke="#e2e2e6" stroke-width="1"/><rect x="166.1" y="50" width="22.7" height="3.4" fill="#c4c5cc"/><rect x="166.1" y="53.4" width="22.7" height="1.5" fill="#e6e6ea"/><rect x="167.8" y="54.9" width="19.5" height="8.8" fill="#c4c5cc"/><rect x="174.4" y="53.8" width="6.4" height="5" fill="#fff"/><rect x="176.9" y="55.6" width="1.4" height="1.4" fill="#c4c5cc"/><rect x="205.1" y="46.6" width="9.7" height="12.2" fill="#5b5e66"/><rect x="208.5" y="53.9" width="14" height="10.8" fill="#fff"/><rect x="209.5" y="54.9" width="11.9" height="8.8" fill="#5b5e66"/><path d="M216.6 47.2 Q220.2 47.6 221 51.2" fill="none" stroke="#5b5e66" stroke-width="1.3"/><path d="M218.2 51 L224 51 L221.1 53.8 Z" fill="#5b5e66"/><rect x="233.0" y="46.6" width="1" height="18" fill="#d9d9d9"/><rect x="280.8" y="46.6" width="1" height="18" fill="#d9d9d9"/><rect x="320.0" y="46.6" width="1" height="18" fill="#d9d9d9"/><rect x="358.1" y="46.6" width="1" height="18" fill="#d9d9d9"/><rect x="394.8" y="46.6" width="1" height="18" fill="#d9d9d9"/><rect x="503.8" y="46.6" width="1" height="18" fill="#d9d9d9"/><rect x="543.0" y="46.6" width="1" height="18" fill="#d9d9d9"/><rect x="582.5" y="46.6" width="1" height="18" fill="#d9d9d9"/><rect x="618.2" y="46.6" width="1" height="18" fill="#d9d9d9"/><rect x="245.2" y="46.7" width="13.7" height="4.8" fill="#5b5e66"/><rect x="242.7" y="52.9" width="18.5" height="7.4" rx="2" fill="#5b5e66"/><rect x="245.2" y="54.6" width="1.2" height="1.1" fill="#c9cace"/><rect x="244.8" y="58" width="14.6" height="6.2" fill="#fff"/><rect x="245.8" y="58.8" width="12.6" height="4.7" fill="#5b5e66"/><rect x="247.2" y="60.1" width="8" height="0.9" fill="#a9abb0"/><rect x="247.2" y="61.7" width="9.6" height="0.9" fill="#a9abb0"/><path d="M266.2 53.5 L272.6 53.5 L269.4 56.9 Z" fill="#1f6bff"/><rect x="293.3" y="47.8" width="13.7" height="14.9" rx="0.8" fill="#5b5e66"/><rect x="296.2" y="46.4" width="8.4" height="3.8" rx="1" fill="#fff"/><rect x="297.2" y="46.7" width="6.4" height="2.5" rx="0.8" fill="#5b5e66"/><rect x="298.7" y="53" width="11" height="11.5" fill="#fff"/><rect x="299.7" y="54" width="9" height="9.5" fill="#5b5e66"/><rect x="301.8" y="56.1" width="4.8" height="1" fill="#b9bbc0"/><rect x="301.8" y="58.1" width="4.8" height="1" fill="#b9bbc0"/><rect x="301.8" y="60.1" width="4.8" height="1" fill="#b9bbc0"/><path d="M339.5 46.4 L348.4 55 L348.4 57.6 L339.5 49.4 L330.6 57.6 L330.6 55 Z" fill="#5b5e66"/><path d="M339.5 50.9 L346.3 57.2 L346.3 63.7 L332.5 63.7 L332.5 57.2 Z" fill="#5b5e66"/><path d="M336.4 57.3 h5.6 l-1.6 -1.5 M342.6 59.7 h-5.6 l1.6 1.5" fill="none" stroke="#e4e5e8" stroke-width="1.1"/><rect x="378.35" y="46.20" width="2.3" height="2.6" rx="0.4" transform="rotate(0 379.5 52.7)" fill="#5b5e66"/><rect x="378.35" y="46.20" width="2.3" height="2.6" rx="0.4" transform="rotate(45 379.5 52.7)" fill="#5b5e66"/><rect x="378.35" y="46.20" width="2.3" height="2.6" rx="0.4" transform="rotate(90 379.5 52.7)" fill="#5b5e66"/><rect x="378.35" y="46.20" width="2.3" height="2.6" rx="0.4" transform="rotate(135 379.5 52.7)" fill="#5b5e66"/><rect x="378.35" y="46.20" width="2.3" height="2.6" rx="0.4" transform="rotate(180 379.5 52.7)" fill="#5b5e66"/><rect x="378.35" y="46.20" width="2.3" height="2.6" rx="0.4" transform="rotate(225 379.5 52.7)" fill="#5b5e66"/><rect x="378.35" y="46.20" width="2.3" height="2.6" rx="0.4" transform="rotate(270 379.5 52.7)" fill="#5b5e66"/><rect x="378.35" y="46.20" width="2.3" height="2.6" rx="0.4" transform="rotate(315 379.5 52.7)" fill="#5b5e66"/><circle cx="379.5" cy="52.7" r="4.9" fill="#5b5e66"/><circle cx="379.5" cy="52.7" r="2.5" fill="#fff"/><rect x="367.3" y="56.2" width="1.6" height="5.8" rx="0.4" fill="#5b5e66"/><path d="M369.6 56.2 L378 56.2 L385.4 58 L386 64.5 L369.6 64.5 Z" fill="#fff"/><path d="M370.2 57.2 Q372.4 56.4 375 56.8 L378.6 58 Q379.8 59 378.6 59.4 L374.6 59.4 L378.2 60.2 Q380.8 60.2 383.2 58.8 Q385 58.2 384.6 59.6 Q381.4 62.8 376.8 63.4 Q373 63 370.2 62 Z" fill="#5b5e66"/><rect x="407.3" y="50.800000000000004" width="8.8" height="8.6" rx="1.2" fill="#fff" stroke="#444" stroke-width="1.2"/><rect x="518.2" y="46.6" width="11.8" height="5" fill="#5b5e66"/><path d="M514 50 h7 l3 2.2 h10 v12.6 h-20 z" fill="#fff"/><path d="M517 50.8 h3.8 l2.6 2.4 h7.6 a2 2 0 0 1 2 2 v6.8 a2 2 0 0 1 -2 2 h-14 a2 2 0 0 1 -2 -2 v-9.2 a2 2 0 0 1 2 -2 z" fill="#5b5e66"/><rect x="555.9" y="46.8" width="3.3" height="11" rx="1.6" fill="#5b5e66"/><circle cx="557.6" cy="58.9" r="3.7" fill="#5b5e66"/><path d="M556.5 59.4 h2.2 v4.4 h-2.2 z" fill="#fff"/><circle cx="569.3" cy="50.5" r="3.7" fill="#5b5e66"/><path d="M568.2 46.2 h2.2 v3.9 h-2.2 z" fill="#fff"/><rect x="567.6" y="50.4" width="3.3" height="12.8" rx="1.6" fill="#5b5e66"/><circle cx="569.3" cy="61.3" r="0.9" fill="#fff"/><path d="M560.8 53.8 h4.6 M564.2 52.8 l1.2 1 M565.4 56 h-4.6 M562 57 l-1.2 -1" fill="none" stroke="#b9bac0" stroke-width="0.8"/><rect x="595" y="48.3" width="12.6" height="14.6" fill="#5b5e66"/><rect x="597.8" y="47.9" width="7" height="1.6" fill="#fff"/><rect x="598.5" y="46.8" width="5.6" height="2.2" rx="0.8" fill="#5b5e66"/><path d="M597.6 61.4 L598 59 L604.2 52.8 L606 54.6 L599.8 60.8 Z" fill="#e2e2e4"/><line x1="71.5" y1="85.5" x2="93.6" y2="85.5" stroke="#1f66f4" stroke-width="2.9" stroke-linecap="round"/><circle cx="65.5" cy="86.3" r="6.1" fill="#d0d0d0" opacity="0.9" filter="url(#blur)"/><circle cx="65.5" cy="85.8" r="5.4" fill="#fefcfe"/><line x1="205" y1="85.5" x2="236.5" y2="85.5" stroke="#1f66f4" stroke-width="2.9" stroke-linecap="round"/><circle cx="220.2" cy="86.3" r="6.1" fill="#d0d0d0" opacity="0.9" filter="url(#blur)"/><circle cx="220.2" cy="85.8" r="5.4" fill="#fefcfe"/><rect x="288.40000000000003" y="81.1" width="8.8" height="8.6" rx="1.2" fill="#fff" stroke="#444" stroke-width="1.2"/><rect x="398.90000000000003" y="81.1" width="8.8" height="8.6" rx="1.2" fill="#fff" stroke="#444" stroke-width="1.2"/><rect x="484.8" y="81.1" width="8.8" height="8.6" rx="1.2" fill="#fff" stroke="#444" stroke-width="1.2"/><rect x="598.0" y="75.7" width="95.10000000000002" height="19.599999999999994" rx="3" fill="#fff" stroke="#d5cfcf" stroke-width="1"/><path d="M682.6 84.4 L685.6 87.4 L688.6 84.4" fill="none" stroke="#2e72e8" stroke-width="1.2"/><rect x="775.9" y="75.3" width="129.30000000000007" height="20.200000000000003" rx="3" fill="#fff" stroke="#d5cfcf" stroke-width="1"/><rect x="892.6" y="81" width="10" height="9.6" rx="1" fill="none" stroke="#2a6de6" stroke-width="1.3"/><rect x="892.6" y="81" width="10" height="2.4" fill="#2a6de6"/><rect x="894.6" y="79.8" width="1.2" height="2" fill="#2a6de6"/><rect x="899.4" y="79.8" width="1.2" height="2" fill="#2a6de6"/><rect x="897.6" y="85.6" width="2.6" height="2.6" fill="#2a6de6"/><rect x="990.9" y="76.3" width="94.50000000000011" height="18.5" rx="3" fill="#fff" stroke="#d5cfcf" stroke-width="1"/><rect x="1167.9" y="76.2" width="173.19999999999982" height="19.39999999999999" rx="3" fill="#fff" stroke="#d5cfcf" stroke-width="1"/><path d="M1331.2 84.4 L1334.2 87.4 L1337.2 84.4" fill="none" stroke="#2e72e8" stroke-width="1.2"/><path d="M1365.4 50 L1375.2 59.6 M1375.2 50 L1365.4 59.6" stroke="#555" stroke-width="1.4"/><path d="M697.9 112.9 L705 112.9 L701.45 117.2 Z" fill="#333"/><circle cx="1375.6" cy="674.1" r="7.75" fill="#393c44"/><path d="M1370.9 674.4 Q1375.5 669.2 1380.1 674.4 Q1375.5 679.4 1370.9 674.4 Z" fill="#fff"/><circle cx="1375.4" cy="674.3" r="1.7" fill="#393c44"/><circle cx="1375.4" cy="674.3" r="0.6" fill="#8a8c92"/><path d="M10.4 710 L16 704.2 L21.6 710" fill="none" stroke="#000" stroke-width="2.2"/><path d="M31 707 L36.4 701.6 L41.8 707 M31 713.6 L36.4 708.2 L41.8 713.6" fill="none" stroke="#000" stroke-width="2.2"/><rect x="146.5" y="696.9" width="15.5" height="17.9" fill="#c8c9d0"/><rect x="148" y="698.6" width="3.8" height="1.4" fill="#e2e3e7"/><rect x="148" y="700.6" width="3.8" height="1.6" fill="#f6f6f8"/><rect x="148" y="702.8" width="3.8" height="3.4" fill="#dcdde2"/><rect x="152.4" y="698.6" width="3.8" height="1.4" fill="#e2e3e7"/><rect x="152.4" y="700.6" width="3.8" height="1.6" fill="#f6f6f8"/><rect x="152.4" y="702.8" width="3.8" height="3.4" fill="#dcdde2"/><rect x="156.8" y="698.6" width="3.8" height="1.4" fill="#e2e3e7"/><rect x="156.8" y="700.6" width="3.8" height="1.6" fill="#f6f6f8"/><rect x="156.8" y="702.8" width="3.8" height="3.4" fill="#dcdde2"/><path d="M155.6 709.4 L159.4 713.2 M159.4 709.4 L155.6 713.2" stroke="#fff" stroke-width="1.3"/><path d="M838.1 183.3 L910.6 304 L934.7 301.6 L941.6 277.8 Z" fill="#0a98f6"/><circle cx="934.7" cy="301.6" r="22.799999999999997" fill="#0a98f6" stroke="#222" stroke-width="1.2"/><circle cx="934.7" cy="301.6" r="21.599999999999998" fill="none" stroke="#fff" stroke-width="1.1"/><text x="935.6" y="309.1" text-anchor="middle" font-family="Liberation Sans" font-weight="700" font-size="18.3" fill="#fff">12</text></svg>

</body></html>
